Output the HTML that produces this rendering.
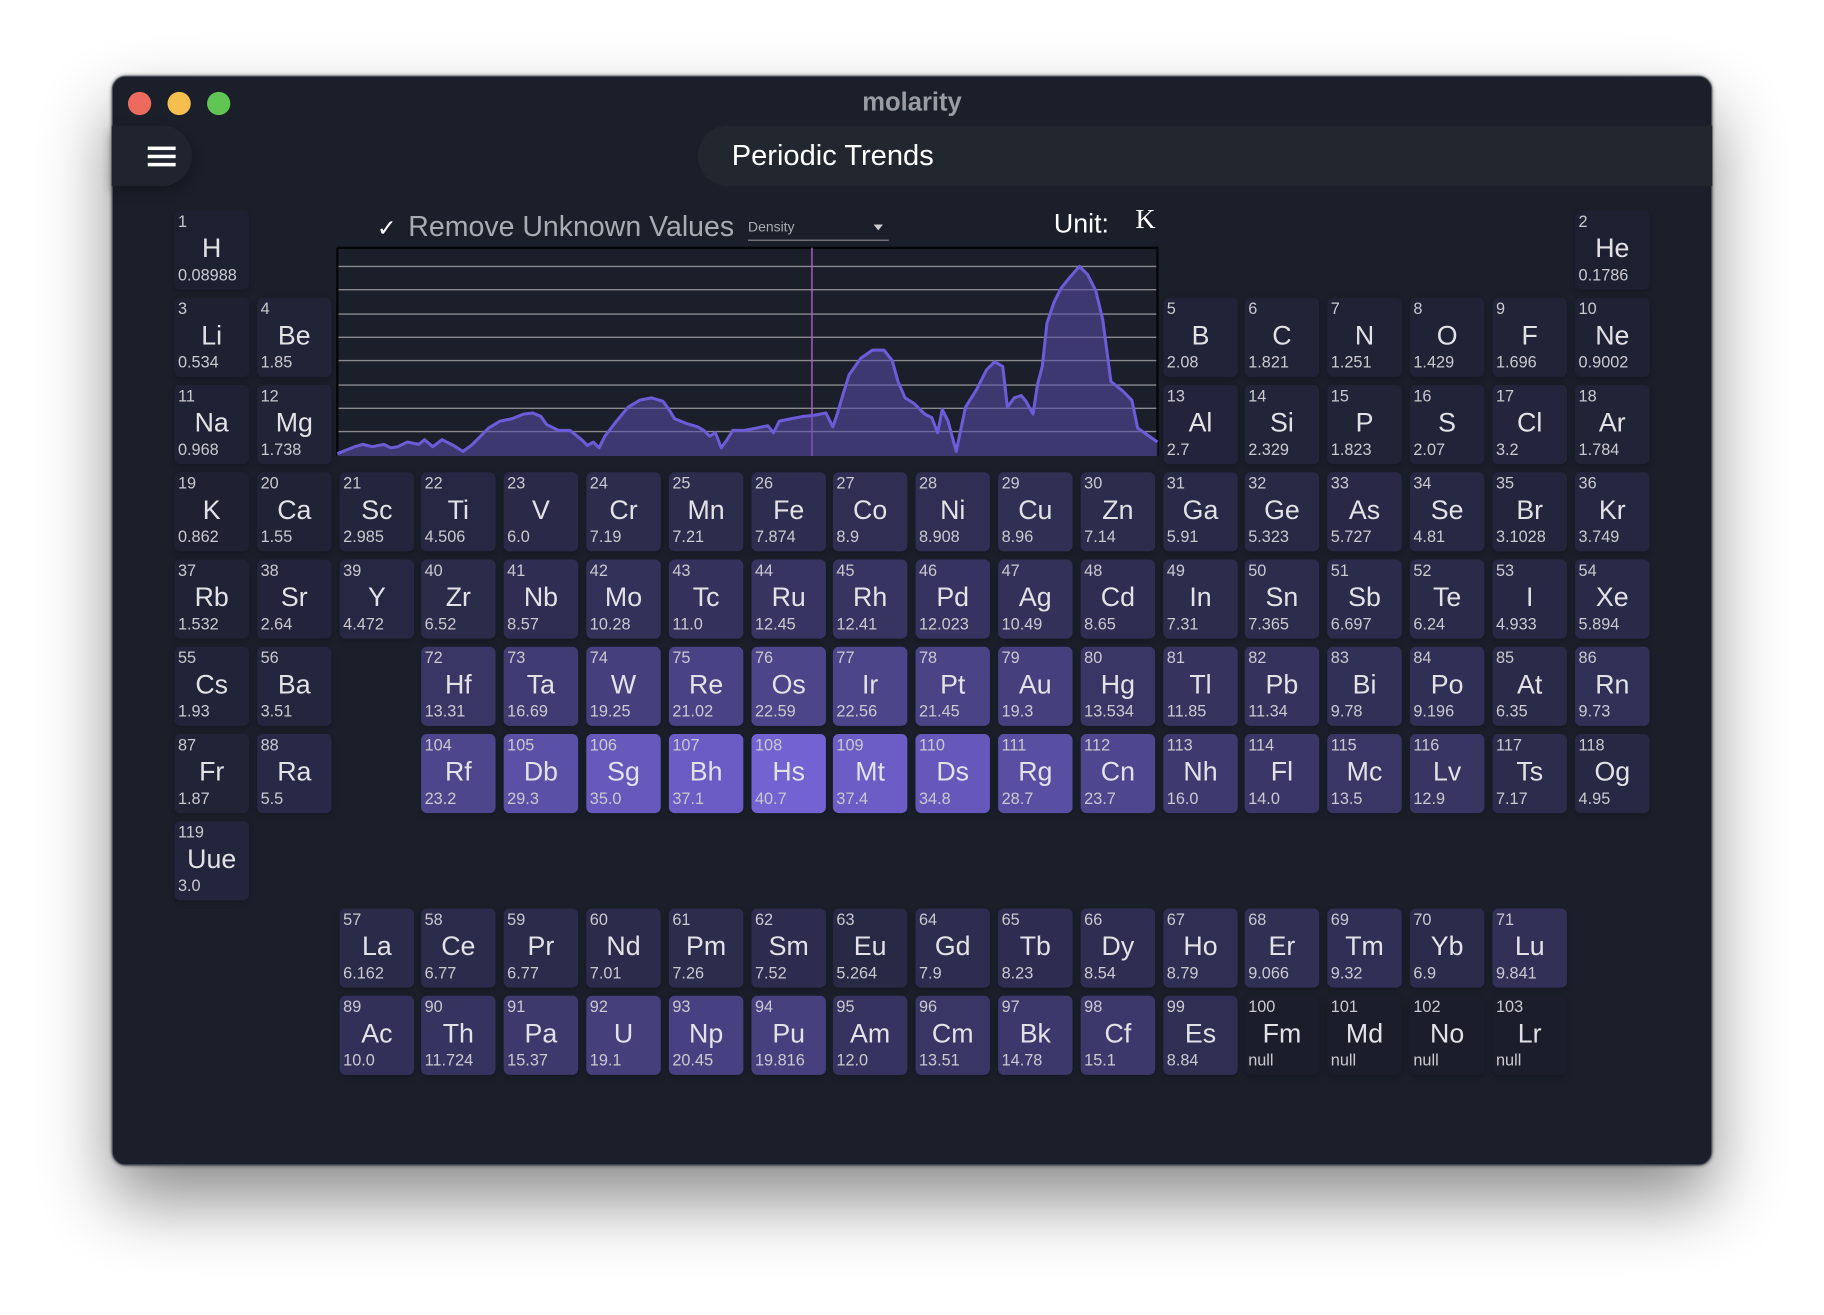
<!DOCTYPE html>
<html><head><meta charset="utf-8"><style>
html,body{margin:0;padding:0;width:1824px;height:1314px;overflow:hidden;background:#fff;font-family:"Liberation Sans",sans-serif}
#s{position:absolute;left:0;top:0;width:1568px;height:1130px;transform:scale(1.16327);transform-origin:0 0}
.win{position:absolute;left:96px;top:65px;width:1376px;height:937px;background:#1b1f2a;border-radius:12px;border:1px solid #555a66;box-sizing:border-box;box-shadow:0 30px 60px rgba(0,0,0,.45),0 0 3px rgba(0,0,0,.5);overflow:hidden}
.dot{position:absolute;top:79px;width:20px;height:20px;border-radius:50%}
.title{position:absolute;left:0;width:1568px;text-align:center;top:75px;font-size:22px;font-weight:bold;color:#9a9ca2}
.ham{position:absolute;left:96px;top:108px;width:69px;height:52px;background:#20242f;border-radius:0 26px 26px 0;box-shadow:0 4px 10px rgba(0,0,0,.3)}
.ham i{position:absolute;left:31px;width:24px;height:3px;background:#fff}
.hdr{position:absolute;left:600px;top:108px;width:872px;height:52px;background:#22262f;border-radius:26px 0 0 26px}
.hdr span{position:absolute;left:29px;top:12px;font-size:25px;color:#fff}
.e{position:absolute;width:64px;height:68px;border-radius:5px;background:color-mix(in srgb,#7262d2 calc(var(--v) * 2.457%),#1d2030);box-shadow:0 2px 5px rgba(0,0,0,.2);color:#e2e2e6}
.e em{position:absolute;left:3px;top:1px;font-style:normal;font-size:14px;line-height:16px;color:#c9c9cf}
.e b{position:absolute;left:0;right:0;top:19px;text-align:center;font-weight:normal;font-size:23px;line-height:26px}
.e small{position:absolute;left:3px;top:47px;font-size:14px;line-height:16px;color:#c9c9cf}
.c1{left:150px}.c2{left:221px}.c3{left:292px}.c4{left:362px}.c5{left:433px}.c6{left:504px}.c7{left:575px}.c8{left:646px}.c9{left:716px}.c10{left:787px}.c11{left:858px}.c12{left:929px}.c13{left:1000px}.c14{left:1070px}.c15{left:1141px}.c16{left:1212px}.c17{left:1283px}.c18{left:1354px}
.r1{top:181px}.r2{top:256px}.r3{top:331px}.r4{top:406px}.r5{top:481px}.r6{top:556px}.r7{top:631px}.r8{top:706px}.r9{top:781px}.r10{top:856px}
</style></head><body><div id="s">
<div class="win"></div>
<div class="dot" style="left:110px;background:#ed6a5e"></div>
<div class="dot" style="left:144px;background:#f5bf4f"></div>
<div class="dot" style="left:178px;background:#61c554"></div>
<div class="title">molarity</div>
<div class="ham"><i style="top:18px"></i><i style="top:25px"></i><i style="top:32px"></i></div>
<div class="hdr"><span>Periodic Trends</span></div>

<div style="position:absolute;left:324px;top:184px;font-size:20px;color:#fff">&#10003;</div>
<div style="position:absolute;left:351px;top:182px;font-size:24.5px;color:#a9abb2">Remove Unknown Values</div>
<div style="position:absolute;left:643px;top:188px;font-size:12px;color:#a9abb2">Density</div>
<div style="position:absolute;left:643px;top:206px;width:121px;height:1px;background:#888"></div>
<div style="position:absolute;left:751px;top:193px;width:0;height:0;border-left:4px solid transparent;border-right:4px solid transparent;border-top:5px solid #ccc"></div>
<div style="position:absolute;left:906px;top:179px;font-size:23px;color:#fff">Unit:</div>
<div style="position:absolute;left:976px;top:176px;font-size:24px;color:#fff;font-family:'Liberation Serif',serif">K</div>

<svg style="position:absolute;left:0;top:0" width="1568" height="1130">
<g stroke="#8a8a8f" stroke-width="1.2">
<line x1="290" x2="995" y1="229" y2="229"/><line x1="290" x2="995" y1="249" y2="249"/><line x1="290" x2="995" y1="270" y2="270"/><line x1="290" x2="995" y1="290" y2="290"/><line x1="290" x2="995" y1="310" y2="310"/><line x1="290" x2="995" y1="331" y2="331"/><line x1="290" x2="995" y1="351" y2="351"/><line x1="290" x2="995" y1="371" y2="371"/>
</g>
<path d="M290,213 H995 V392 M290,213 V392" fill="none" stroke="#050608" stroke-width="2"/>
<line x1="698" x2="698" y1="213" y2="392" stroke="#b35ad0" stroke-width="1.2"/>
<path d="M290,392 L290,390 300,386 305,384 312,382 320,384 330,382 336,385 342,384 350,380 360,382 365,378 372,384 380,378 390,383 398,388 405,383 412,376 420,368 430,362 440,360 450,356 458,355 465,358 470,365 480,370 490,370 495,374 500,378 505,383 510,380 515,385 520,375 530,362 540,350 550,344 560,342 570,345 575,352 580,360 590,364 600,367 605,370 610,375 615,372 620,385 625,378 630,370 640,370 650,368 660,366 665,372 670,362 680,360 690,358 700,357 710,355 716,367 720,355 725,338 730,322 740,308 750,301 760,301 767,310 772,328 778,342 786,347 795,356 801,359 806,372 810,352 815,362 822,388 830,350 840,334 848,318 855,311 862,315 866,350 872,342 878,340 882,345 888,356 892,330 896,315 900,278 906,260 912,248 920,238 928,229 935,236 942,250 948,275 955,328 965,336 973,344 978,368 985,373 995,380 L995,392 Z" fill="rgba(90,78,170,.55)" stroke="none"/>
<path d="M290,390 300,386 305,384 312,382 320,384 330,382 336,385 342,384 350,380 360,382 365,378 372,384 380,378 390,383 398,388 405,383 412,376 420,368 430,362 440,360 450,356 458,355 465,358 470,365 480,370 490,370 495,374 500,378 505,383 510,380 515,385 520,375 530,362 540,350 550,344 560,342 570,345 575,352 580,360 590,364 600,367 605,370 610,375 615,372 620,385 625,378 630,370 640,370 650,368 660,366 665,372 670,362 680,360 690,358 700,357 710,355 716,367 720,355 725,338 730,322 740,308 750,301 760,301 767,310 772,328 778,342 786,347 795,356 801,359 806,372 810,352 815,362 822,388 830,350 840,334 848,318 855,311 862,315 866,350 872,342 878,340 882,345 888,356 892,330 896,315 900,278 906,260 912,248 920,238 928,229 935,236 942,250 948,275 955,328 965,336 973,344 978,368 985,373 995,380" fill="none" stroke="#6c5cd8" stroke-width="2.6" stroke-linejoin="round"/>
</svg>

<div class="e c1 r1" style="--v:0.09"><em>1</em><b>H</b><small>0.08988</small></div>
<div class="e c18 r1" style="--v:0.18"><em>2</em><b>He</b><small>0.1786</small></div>

<div class="e c1 r2" style="--v:0.534"><em>3</em><b>Li</b><small>0.534</small></div>
<div class="e c2 r2" style="--v:1.85"><em>4</em><b>Be</b><small>1.85</small></div>
<div class="e c13 r2" style="--v:2.08"><em>5</em><b>B</b><small>2.08</small></div>
<div class="e c14 r2" style="--v:1.821"><em>6</em><b>C</b><small>1.821</small></div>
<div class="e c15 r2" style="--v:1.251"><em>7</em><b>N</b><small>1.251</small></div>
<div class="e c16 r2" style="--v:1.429"><em>8</em><b>O</b><small>1.429</small></div>
<div class="e c17 r2" style="--v:1.696"><em>9</em><b>F</b><small>1.696</small></div>
<div class="e c18 r2" style="--v:0.9"><em>10</em><b>Ne</b><small>0.9002</small></div>

<div class="e c1 r3" style="--v:0.968"><em>11</em><b>Na</b><small>0.968</small></div>
<div class="e c2 r3" style="--v:1.738"><em>12</em><b>Mg</b><small>1.738</small></div>
<div class="e c13 r3" style="--v:2.7"><em>13</em><b>Al</b><small>2.7</small></div>
<div class="e c14 r3" style="--v:2.329"><em>14</em><b>Si</b><small>2.329</small></div>
<div class="e c15 r3" style="--v:1.823"><em>15</em><b>P</b><small>1.823</small></div>
<div class="e c16 r3" style="--v:2.07"><em>16</em><b>S</b><small>2.07</small></div>
<div class="e c17 r3" style="--v:3.2"><em>17</em><b>Cl</b><small>3.2</small></div>
<div class="e c18 r3" style="--v:1.784"><em>18</em><b>Ar</b><small>1.784</small></div>

<div class="e c1 r4" style="--v:0.862"><em>19</em><b>K</b><small>0.862</small></div>
<div class="e c2 r4" style="--v:1.55"><em>20</em><b>Ca</b><small>1.55</small></div>
<div class="e c3 r4" style="--v:2.985"><em>21</em><b>Sc</b><small>2.985</small></div>
<div class="e c4 r4" style="--v:4.506"><em>22</em><b>Ti</b><small>4.506</small></div>
<div class="e c5 r4" style="--v:6.0"><em>23</em><b>V</b><small>6.0</small></div>
<div class="e c6 r4" style="--v:7.19"><em>24</em><b>Cr</b><small>7.19</small></div>
<div class="e c7 r4" style="--v:7.21"><em>25</em><b>Mn</b><small>7.21</small></div>
<div class="e c8 r4" style="--v:7.874"><em>26</em><b>Fe</b><small>7.874</small></div>
<div class="e c9 r4" style="--v:8.9"><em>27</em><b>Co</b><small>8.9</small></div>
<div class="e c10 r4" style="--v:8.908"><em>28</em><b>Ni</b><small>8.908</small></div>
<div class="e c11 r4" style="--v:8.96"><em>29</em><b>Cu</b><small>8.96</small></div>
<div class="e c12 r4" style="--v:7.14"><em>30</em><b>Zn</b><small>7.14</small></div>
<div class="e c13 r4" style="--v:5.91"><em>31</em><b>Ga</b><small>5.91</small></div>
<div class="e c14 r4" style="--v:5.323"><em>32</em><b>Ge</b><small>5.323</small></div>
<div class="e c15 r4" style="--v:5.727"><em>33</em><b>As</b><small>5.727</small></div>
<div class="e c16 r4" style="--v:4.81"><em>34</em><b>Se</b><small>4.81</small></div>
<div class="e c17 r4" style="--v:3.1"><em>35</em><b>Br</b><small>3.1028</small></div>
<div class="e c18 r4" style="--v:3.749"><em>36</em><b>Kr</b><small>3.749</small></div>

<div class="e c1 r5" style="--v:1.532"><em>37</em><b>Rb</b><small>1.532</small></div>
<div class="e c2 r5" style="--v:2.64"><em>38</em><b>Sr</b><small>2.64</small></div>
<div class="e c3 r5" style="--v:4.472"><em>39</em><b>Y</b><small>4.472</small></div>
<div class="e c4 r5" style="--v:6.52"><em>40</em><b>Zr</b><small>6.52</small></div>
<div class="e c5 r5" style="--v:8.57"><em>41</em><b>Nb</b><small>8.57</small></div>
<div class="e c6 r5" style="--v:10.28"><em>42</em><b>Mo</b><small>10.28</small></div>
<div class="e c7 r5" style="--v:11.0"><em>43</em><b>Tc</b><small>11.0</small></div>
<div class="e c8 r5" style="--v:12.45"><em>44</em><b>Ru</b><small>12.45</small></div>
<div class="e c9 r5" style="--v:12.41"><em>45</em><b>Rh</b><small>12.41</small></div>
<div class="e c10 r5" style="--v:12.023"><em>46</em><b>Pd</b><small>12.023</small></div>
<div class="e c11 r5" style="--v:10.49"><em>47</em><b>Ag</b><small>10.49</small></div>
<div class="e c12 r5" style="--v:8.65"><em>48</em><b>Cd</b><small>8.65</small></div>
<div class="e c13 r5" style="--v:7.31"><em>49</em><b>In</b><small>7.31</small></div>
<div class="e c14 r5" style="--v:7.365"><em>50</em><b>Sn</b><small>7.365</small></div>
<div class="e c15 r5" style="--v:6.697"><em>51</em><b>Sb</b><small>6.697</small></div>
<div class="e c16 r5" style="--v:6.24"><em>52</em><b>Te</b><small>6.24</small></div>
<div class="e c17 r5" style="--v:4.933"><em>53</em><b>I</b><small>4.933</small></div>
<div class="e c18 r5" style="--v:5.894"><em>54</em><b>Xe</b><small>5.894</small></div>

<div class="e c1 r6" style="--v:1.93"><em>55</em><b>Cs</b><small>1.93</small></div>
<div class="e c2 r6" style="--v:3.51"><em>56</em><b>Ba</b><small>3.51</small></div>
<div class="e c4 r6" style="--v:13.31"><em>72</em><b>Hf</b><small>13.31</small></div>
<div class="e c5 r6" style="--v:16.69"><em>73</em><b>Ta</b><small>16.69</small></div>
<div class="e c6 r6" style="--v:19.25"><em>74</em><b>W</b><small>19.25</small></div>
<div class="e c7 r6" style="--v:21.02"><em>75</em><b>Re</b><small>21.02</small></div>
<div class="e c8 r6" style="--v:22.59"><em>76</em><b>Os</b><small>22.59</small></div>
<div class="e c9 r6" style="--v:22.56"><em>77</em><b>Ir</b><small>22.56</small></div>
<div class="e c10 r6" style="--v:21.45"><em>78</em><b>Pt</b><small>21.45</small></div>
<div class="e c11 r6" style="--v:19.3"><em>79</em><b>Au</b><small>19.3</small></div>
<div class="e c12 r6" style="--v:13.534"><em>80</em><b>Hg</b><small>13.534</small></div>
<div class="e c13 r6" style="--v:11.85"><em>81</em><b>Tl</b><small>11.85</small></div>
<div class="e c14 r6" style="--v:11.34"><em>82</em><b>Pb</b><small>11.34</small></div>
<div class="e c15 r6" style="--v:9.78"><em>83</em><b>Bi</b><small>9.78</small></div>
<div class="e c16 r6" style="--v:9.196"><em>84</em><b>Po</b><small>9.196</small></div>
<div class="e c17 r6" style="--v:6.35"><em>85</em><b>At</b><small>6.35</small></div>
<div class="e c18 r6" style="--v:9.73"><em>86</em><b>Rn</b><small>9.73</small></div>

<div class="e c1 r7" style="--v:1.87"><em>87</em><b>Fr</b><small>1.87</small></div>
<div class="e c2 r7" style="--v:5.5"><em>88</em><b>Ra</b><small>5.5</small></div>
<div class="e c4 r7" style="--v:23.2"><em>104</em><b>Rf</b><small>23.2</small></div>
<div class="e c5 r7" style="--v:29.3"><em>105</em><b>Db</b><small>29.3</small></div>
<div class="e c6 r7" style="--v:35.0"><em>106</em><b>Sg</b><small>35.0</small></div>
<div class="e c7 r7" style="--v:37.1"><em>107</em><b>Bh</b><small>37.1</small></div>
<div class="e c8 r7" style="--v:40.7"><em>108</em><b>Hs</b><small>40.7</small></div>
<div class="e c9 r7" style="--v:37.4"><em>109</em><b>Mt</b><small>37.4</small></div>
<div class="e c10 r7" style="--v:34.8"><em>110</em><b>Ds</b><small>34.8</small></div>
<div class="e c11 r7" style="--v:28.7"><em>111</em><b>Rg</b><small>28.7</small></div>
<div class="e c12 r7" style="--v:23.7"><em>112</em><b>Cn</b><small>23.7</small></div>
<div class="e c13 r7" style="--v:16.0"><em>113</em><b>Nh</b><small>16.0</small></div>
<div class="e c14 r7" style="--v:14.0"><em>114</em><b>Fl</b><small>14.0</small></div>
<div class="e c15 r7" style="--v:13.5"><em>115</em><b>Mc</b><small>13.5</small></div>
<div class="e c16 r7" style="--v:12.9"><em>116</em><b>Lv</b><small>12.9</small></div>
<div class="e c17 r7" style="--v:7.17"><em>117</em><b>Ts</b><small>7.17</small></div>
<div class="e c18 r7" style="--v:4.95"><em>118</em><b>Og</b><small>4.95</small></div>

<div class="e c1 r8" style="--v:3.0"><em>119</em><b>Uue</b><small>3.0</small></div>

<div class="e c3 r9" style="--v:6.162"><em>57</em><b>La</b><small>6.162</small></div>
<div class="e c4 r9" style="--v:6.77"><em>58</em><b>Ce</b><small>6.77</small></div>
<div class="e c5 r9" style="--v:6.77"><em>59</em><b>Pr</b><small>6.77</small></div>
<div class="e c6 r9" style="--v:7.01"><em>60</em><b>Nd</b><small>7.01</small></div>
<div class="e c7 r9" style="--v:7.26"><em>61</em><b>Pm</b><small>7.26</small></div>
<div class="e c8 r9" style="--v:7.52"><em>62</em><b>Sm</b><small>7.52</small></div>
<div class="e c9 r9" style="--v:5.264"><em>63</em><b>Eu</b><small>5.264</small></div>
<div class="e c10 r9" style="--v:7.9"><em>64</em><b>Gd</b><small>7.9</small></div>
<div class="e c11 r9" style="--v:8.23"><em>65</em><b>Tb</b><small>8.23</small></div>
<div class="e c12 r9" style="--v:8.54"><em>66</em><b>Dy</b><small>8.54</small></div>
<div class="e c13 r9" style="--v:8.79"><em>67</em><b>Ho</b><small>8.79</small></div>
<div class="e c14 r9" style="--v:9.066"><em>68</em><b>Er</b><small>9.066</small></div>
<div class="e c15 r9" style="--v:9.32"><em>69</em><b>Tm</b><small>9.32</small></div>
<div class="e c16 r9" style="--v:6.9"><em>70</em><b>Yb</b><small>6.9</small></div>
<div class="e c17 r9" style="--v:9.841"><em>71</em><b>Lu</b><small>9.841</small></div>

<div class="e c3 r10" style="--v:10.0"><em>89</em><b>Ac</b><small>10.0</small></div>
<div class="e c4 r10" style="--v:11.724"><em>90</em><b>Th</b><small>11.724</small></div>
<div class="e c5 r10" style="--v:15.37"><em>91</em><b>Pa</b><small>15.37</small></div>
<div class="e c6 r10" style="--v:19.1"><em>92</em><b>U</b><small>19.1</small></div>
<div class="e c7 r10" style="--v:20.45"><em>93</em><b>Np</b><small>20.45</small></div>
<div class="e c8 r10" style="--v:19.816"><em>94</em><b>Pu</b><small>19.816</small></div>
<div class="e c9 r10" style="--v:12.0"><em>95</em><b>Am</b><small>12.0</small></div>
<div class="e c10 r10" style="--v:13.51"><em>96</em><b>Cm</b><small>13.51</small></div>
<div class="e c11 r10" style="--v:14.78"><em>97</em><b>Bk</b><small>14.78</small></div>
<div class="e c12 r10" style="--v:15.1"><em>98</em><b>Cf</b><small>15.1</small></div>
<div class="e c13 r10" style="--v:8.84"><em>99</em><b>Es</b><small>8.84</small></div>
<div class="e c14 r10" style="--v:0;background:#1b1e2a"><em>100</em><b>Fm</b><small>null</small></div>
<div class="e c15 r10" style="--v:0;background:#1b1e2a"><em>101</em><b>Md</b><small>null</small></div>
<div class="e c16 r10" style="--v:0;background:#1b1e2a"><em>102</em><b>No</b><small>null</small></div>
<div class="e c17 r10" style="--v:0;background:#1b1e2a"><em>103</em><b>Lr</b><small>null</small></div>
</div></body></html>
